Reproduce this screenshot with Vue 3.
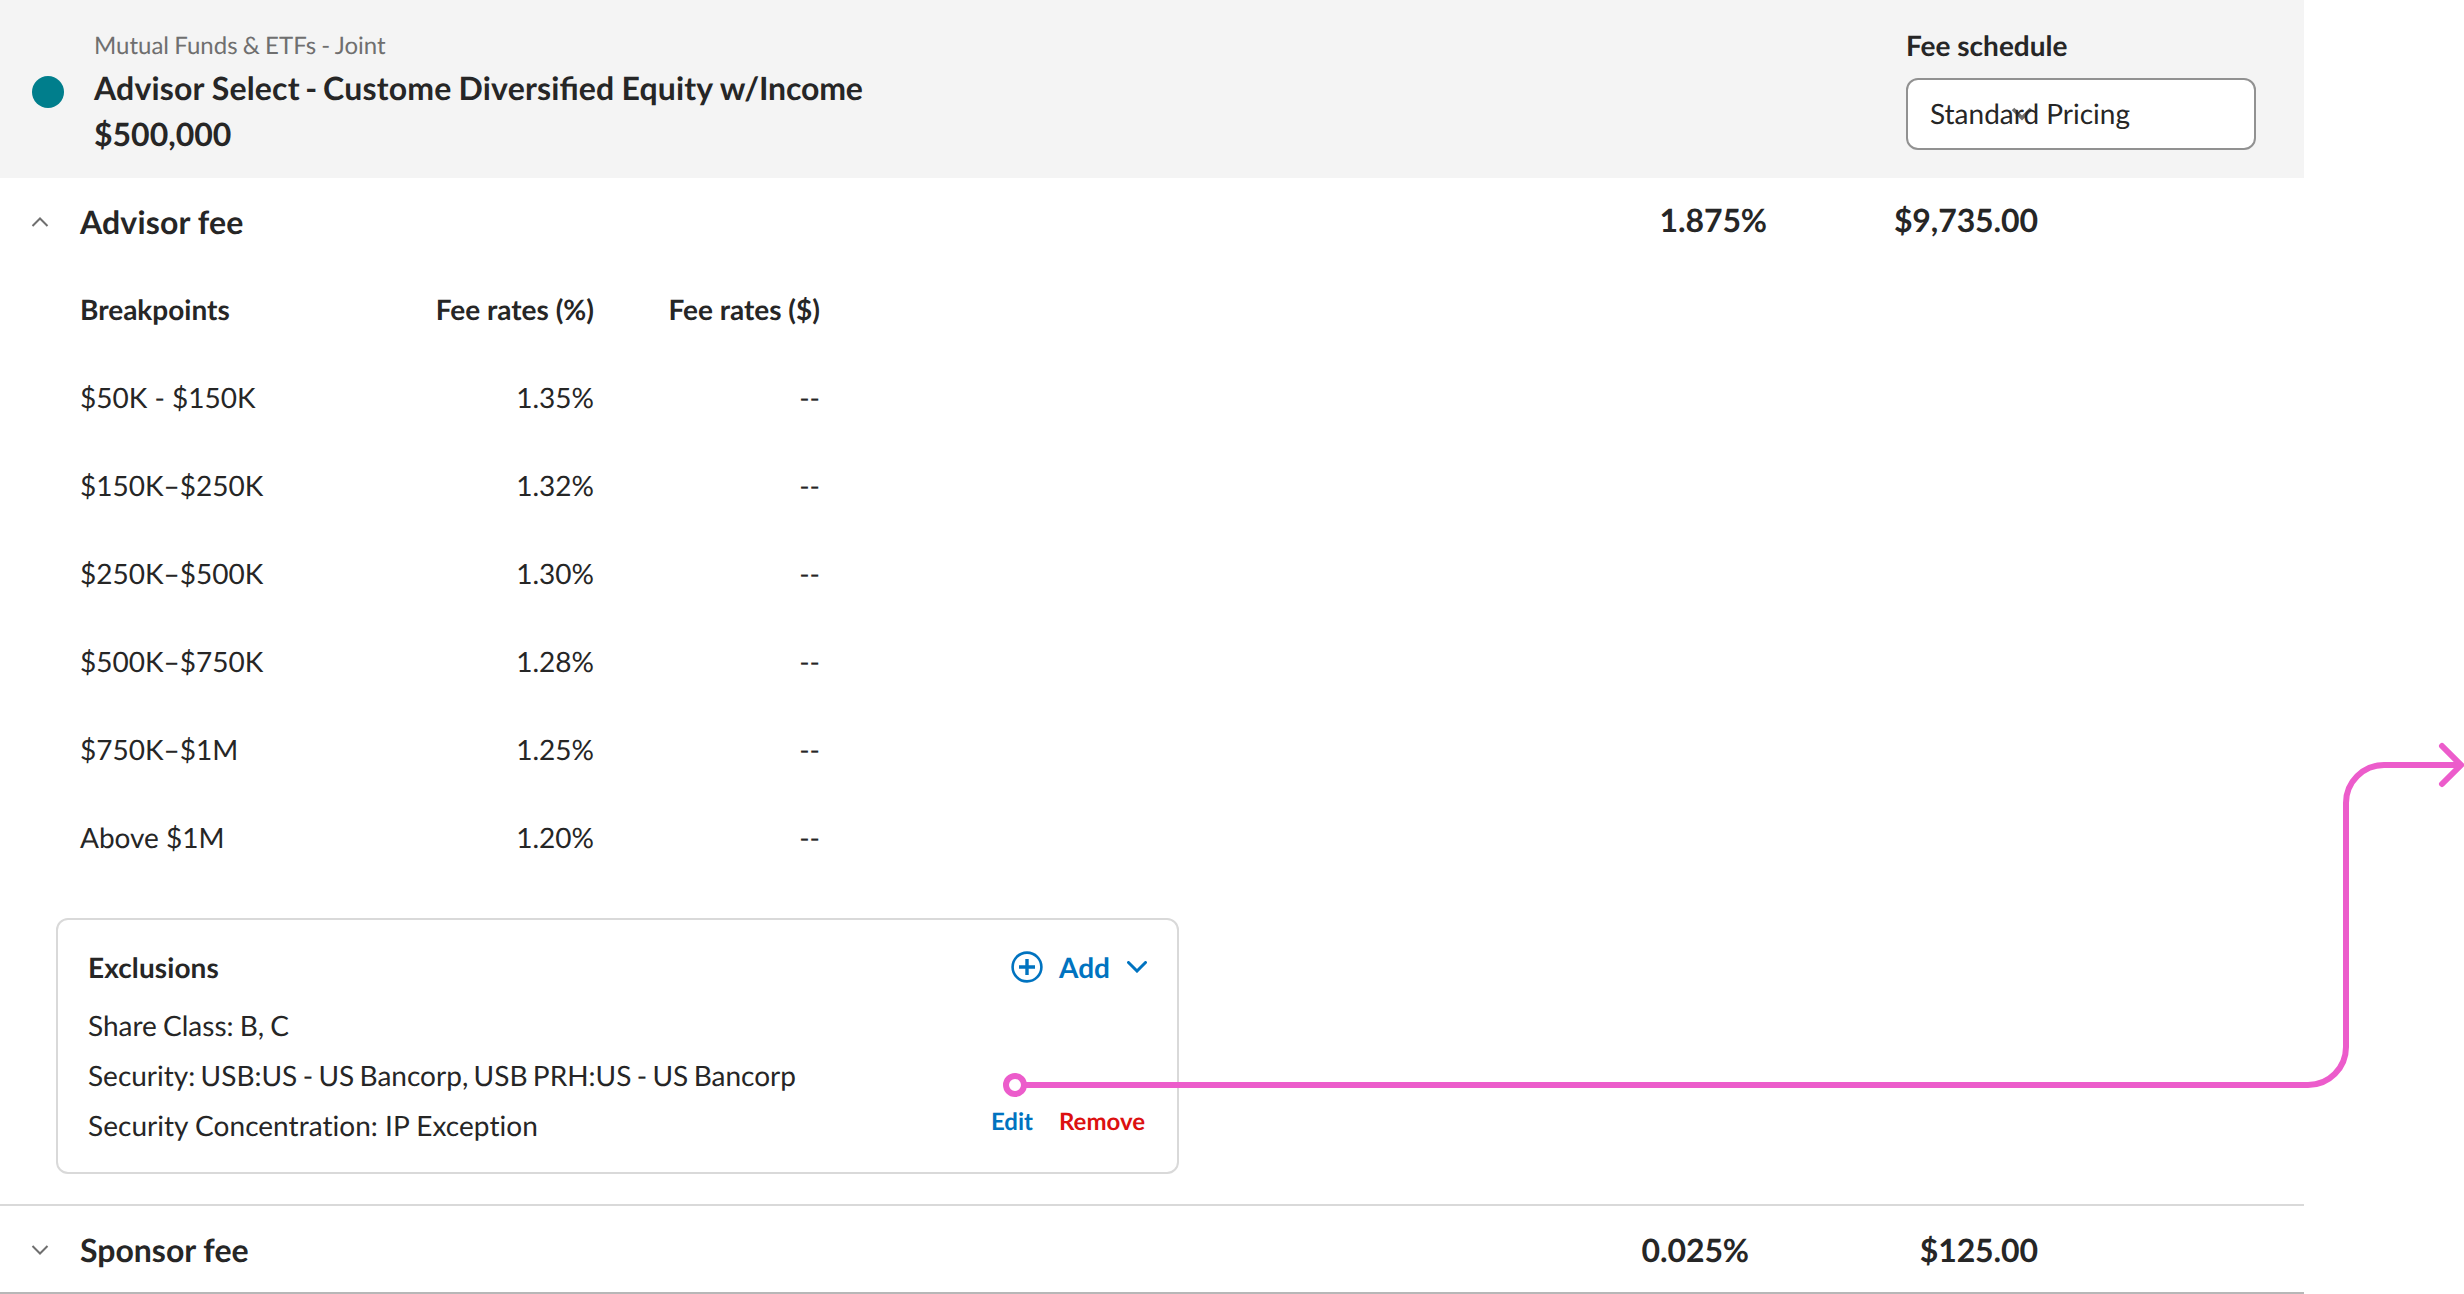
<script setup>
const rows = [
  ['$50K - $150K', '1.35%'],
  ['$150K–$250K', '1.32%'],
  ['$250K–$500K', '1.30%'],
  ['$500K–$750K', '1.28%'],
  ['$750K–$1M', '1.25%'],
  ['Above $1M', '1.20%'],
]
</script>

<template>
  <main class="page">
    <section class="panel">
      <header class="head">
        <span class="dot"></span>
        <div class="title">
          <div class="kind">Mutual Funds &amp; ETFs - Joint</div>
          <div class="name fund">Advisor Select<span class="dash"> - </span>Custome<span class="rest"> Diversi<span class="liga">fi</span>ed Equity </span><span class="tail">w/Income</span></div>
          <div class="name">$500,000</div>
        </div>
        <div class="schedule">
          <div class="label">Fee schedule</div>
          <div class="select">
            <svg class="caret" width="22" height="14" viewBox="0 0 22 14"><path d="M2 2l9 9 9-9" /></svg>
            <span class="value">Standard Pricing</span>
          </div>
        </div>
      </header>

      <div class="fee advisor">
        <svg class="chev" width="18" height="12" viewBox="0 0 18 12"><path d="M1.500 10l7.500-7.500 7.500 7.500" /></svg>
        <h2>Advisor fee</h2>
        <b class="pct">1.875%</b>
        <b class="usd">$9,735.00</b>
      </div>

      <div class="table">
        <div class="row th"><span>Breakpoints</span><span>Fee rates (%)</span><span>Fee rates ($)</span></div>
        <div v-for="r in rows" :key="r[0]" class="row"><span>{{ r[0] }}</span><span>{{ r[1] }}</span><span>--</span></div>
      </div>

      <div class="card">
        <div class="list">
          <div class="cap">Exclusions</div>
          <div class="share">Share Class: B, C</div>
          <div class="security">Security: USB:US - US Bancorp, USB PRH:US - US Bancorp</div>
          <div class="concentration">Security Concentration: IP Exception</div>
        </div>
        <div class="side">
          <div class="add">
            <svg width="32" height="32" viewBox="0 0 32 32"><circle cx="16" cy="16" r="14.4" stroke-width="2.6" /><path d="M16 8v16M8 16h16" stroke-width="3.4" /></svg>
            <span>Add</span>
            <svg class="down" width="20" height="12" viewBox="0 0 20 12"><path d="M1.5 1.5L10 10l8.500-8.500" stroke-width="3" stroke-linecap="round" /></svg>
          </div>
          <div class="links"><span class="edit">Edit</span><span class="remove">Remove</span></div>
        </div>
      </div>

      <div class="fee sponsor">
        <svg class="chev" width="18" height="12" viewBox="0 0 18 12"><path d="M1.500 3l7.500 7.500 7.500-7.500" /></svg>
        <h2>Sponsor fee</h2>
        <b class="pct">0.025%</b>
        <b class="usd">$125.00</b>
      </div>
    </section>

    <svg class="connector" width="2464" height="1294" viewBox="0 0 2464 1294">
      <path d="M1024 1085H2308A38 38 0 0 0 2346 1047V803A38 38 0 0 1 2384 765H2460" />
      <path d="M2442 746l19 19-19 19" stroke-linecap="round" />
      <circle cx="1015" cy="1085" r="9" />
    </svg>
  </main>
</template>

<style>
body { margin: 0; background: #fff; }
</style>
<style scoped>
.page { position: relative; width: 2464px; height: 1294px; overflow: hidden; font-family: Lato, "Liberation Sans", sans-serif; font-size: 28px; color: #262626; text-rendering: geometricPrecision; }
.panel { width: 2304px; }
.head { display: flex; height: 178px; background: #f4f4f4; }
.dot { width: 32px; height: 32px; margin: 76px 0 0 32px; border-radius: 50%; background: #007e8c; }
.title { margin: 28px 0 0 30px; flex: 1; white-space: nowrap; }
.kind { font-size: 24px; line-height: 36px; color: #6f6f6f; margin-bottom: 1px; word-spacing: -0.9px; }
.name { font-size: 32px; line-height: 46px; font-weight: 700; }
.fund { letter-spacing: 0.18px; word-spacing: -0.3px; }
.dash { word-spacing: -2.35px; }
.rest { word-spacing: -0.9px; }
.tail { letter-spacing: -0.17px; }
.liga { letter-spacing: 0; }
.schedule { width: 350px; margin: 27px 48px 0 0; }
.label { font-weight: 700; line-height: 36px; }
.select { position: relative; box-sizing: border-box; width: 350px; height: 72px; margin-top: 15px; padding-left: 22px; border: 2px solid #919191; border-radius: 12px; background: #fff; line-height: 67px; }
.value { position: relative; }
.caret { position: absolute; left: 103px; top: 27px; }
.caret path, .chev path { fill: none; stroke: #6f6f6f; stroke-width: 2; }
.caret path { stroke-width: 3.6; }
.fee { display: flex; align-items: center; font-size: 32px; }
.fee h2 { width: 1300px; margin: 0 0 0 31px; font-size: 32px; }
.fee b { text-align: right; letter-spacing: -0.1px; }
.chev { margin-left: 31px; }
.pct { width: 387px; }
.usd { width: 271px; }
.advisor { height: 88px; }
.advisor h2 { margin-top: -2px; letter-spacing: 0.15px; }
.advisor b { margin-top: -5px; }
.table { margin: -1px 0 0 80px; }
.row { display: grid; grid-template-columns: 300px 214px 226px; height: 88px; align-items: center; }
.row span + span { text-align: right; }
.th { font-weight: 700; }
.card { box-sizing: border-box; display: flex; justify-content: space-between; width: 1123px; height: 256px; margin: 37px 0 0 56px; padding: 0 30px; border: 2px solid #d9d9d9; border-radius: 12px; }
.list { line-height: 50px; white-space: nowrap; font-variant-ligatures: none; }
.cap { font-weight: 700; margin: 22px 0 8px; letter-spacing: 0.1px; }
.share { word-spacing: -1px; }
.security { word-spacing: -1.8px; }
.concentration { letter-spacing: 0.04px; }
.side { display: flex; flex-direction: column; align-items: flex-end; }
.side path, .side circle { fill: none; stroke: #0073c0; }
.add { display: flex; align-items: center; margin-top: 22px; height: 50px; color: #0073c0; font-weight: 700; }
.add span { margin: 0 17px 0 16px; }
.links { display: flex; margin-top: 115px; font-size: 24px; font-weight: 700; line-height: 30px; gap: 26px; padding-right: 2px; }
.edit { color: #0073c0; }
.remove { color: #dc1010; }
.sponsor { box-sizing: border-box; height: 90px; margin-top: 30px; border-top: 2px solid #d9d9d9; border-bottom: 2px solid #b7b7b7; }
.sponsor .pct { width: 369px; }
.sponsor .usd { width: 289px; }
.connector { position: absolute; left: 0; top: 0; fill: none; stroke: #ec5ccb; stroke-width: 6; }
.connector circle { fill: #fff; }
</style>
